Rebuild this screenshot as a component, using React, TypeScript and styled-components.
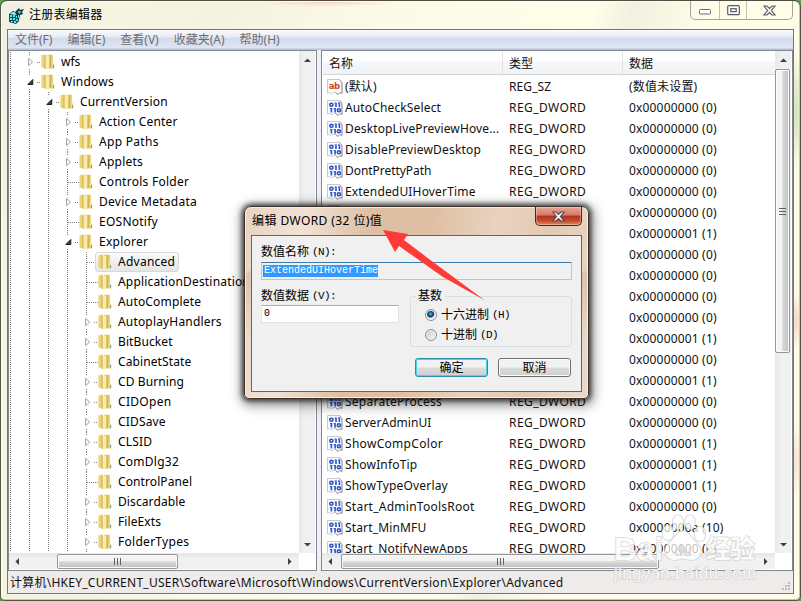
import React from "react";
import styled, { createGlobalStyle, css } from "styled-components";

const UI = `"Noto Sans", "Noto Sans CJK SC", sans-serif`;
const MONO = `"Liberation Mono", "Noto Sans CJK SC", monospace`;

const GlobalStyle = createGlobalStyle`
  html, body { margin: 0; padding: 0; overflow: hidden; }
  * { box-sizing: border-box; }
  body { font: 12px/20px ${UI}; color: #111; }
  svg { display: block; flex: none; }
`;

const Desktop = styled.main`
  position: relative;
  width: 801px;
  height: 601px;
  overflow: hidden;
  background: #5aa14c;
`;

const Window = styled.section`
  width: 801px;
  height: 601px;
  display: flex;
  flex-direction: column;
  border: 1px solid #555449;
  border-top: 1px solid #4f4b45;
  border-radius: 7px 7px 5px 5px;
  overflow: hidden;
  padding: 0 6px 6px 6px;
  background:
    radial-gradient(ellipse 6px 60px at 795px 110px, #cfe2b4 0%, transparent 100%),
    radial-gradient(ellipse 6px 30px at 795px 320px, #f8d5bd 0%, transparent 100%),
    radial-gradient(ellipse 6px 40px at 795px 460px, #f6e2cd 0%, transparent 100%),
    radial-gradient(ellipse 75px 5px at 325px 1px, #fbd3c3 0%, transparent 100%),
    linear-gradient(105deg, #eef0e2 0%, #f6f5e2 9%, #f3f3e0 24%, #fbfae7 38%, #fffee9 62%, #f1f1df 66%, #fffde8 74%, #fffde9 100%);
  box-shadow: inset 1px 1px 0 #fffef4, inset -1px -1px 0 #c3c6b5;
`;

const TitleBar = styled.header`
  display: flex;
  align-items: flex-start;
  height: 28px;
  flex: none;
`;

const TitleIcon = styled.span`
  margin: 6px 0 0 1px;
`;

const TitleText = styled.h1`
  margin: 4px 0 0 4px;
  font: 12px/20px ${UI};
  letter-spacing: 0.25px;
  color: #000;
  flex: 1;
`;

const Captions = styled.div`
  display: flex;
  width: 103px;
  height: 19px;
  border: 1px solid #a4a49a;
  border-top: 0;
  border-radius: 0 0 5px 5px;
  overflow: hidden;
  margin-right: 1px;
`;

const Caption = styled.button<{ $w: number }>`
  width: ${(p) => p.$w}px;
  border: 0;
  border-left: 1px solid #c1c1b5;
  padding: 0;
  background: transparent;
  display: flex;
  align-items: center;
  justify-content: center;
  &:first-child { border-left: 0; padding-top: 3px; }
`;

const Client = styled.div`
  flex: 1;
  display: flex;
  flex-direction: column;
  border: 1px solid #77776e;
  background: #eeebea;
  min-height: 0;
  width: 787px;
`;

const MenuBar = styled.nav`
  height: 20px;
  flex: none;
  display: flex;
  gap: 15px;
  padding-left: 7px;
  background: linear-gradient(#fafbfd 0%, #e6eaf5 35%, #d4dbee 42%, #dfe5f3 92%, #b9c2d6 93%);
  color: #6e6e6e;
  line-height: 20px;
`;

const MenuItem = styled.span`
  white-space: nowrap;
`;

const Panes = styled.div`
  display: grid;
  grid-template-columns: 309px 472px;
  gap: 4px;
  height: 521px;
  flex: none;
  background: #eff0f5;
`;

const Pane = styled.section`
  border: 1px solid #828790;
  background: #fff;
  display: grid;
  grid-template-columns: minmax(0, 1fr) 17px;
  grid-template-rows: 502px 17px;
  min-width: 0;
`;

const Viewport = styled.div`
  overflow: hidden;
  padding-top: 1px;
`;

const TreeRow = styled.div`
  display: flex;
  align-items: center;
  height: 20px;
  padding-left: 1px;
`;

const Guide = styled.span<{ $gap?: boolean }>`
  width: 19px;
  height: 20px;
  flex: none;
  background-image: repeating-linear-gradient(#7e7e7e 0 1px, transparent 1px 2px);
  background-size: 1px 20px;
  background-repeat: no-repeat;
  ${(p) =>
    p.$gap &&
    css`
      background-size: 1px 3px, 1px 3px;
      background-image: repeating-linear-gradient(#7e7e7e 0 1px, transparent 1px 2px),
        repeating-linear-gradient(#7e7e7e 0 1px, transparent 1px 2px);
      background-position: 0 0, 0 17px;
    `}
`;

const Joint = styled(Guide)`
  width: 12px;
  display: flex;
  align-items: center;
`;

const Twig = styled.span<{ $long?: boolean }>`
  width: ${(p) => (p.$long ? 11 : 4)}px;
  height: 1px;
  margin-left: ${(p) => (p.$long ? 1 : 0)}px;
  background: repeating-linear-gradient(90deg, #7e7e7e 0 1px, transparent 1px 2px);
`;

const Expander = styled.span`
  width: 8px;
  margin-left: -2px;
  margin-right: 2px;
  flex: none;
`;

const NodeLabel = styled.span<{ $s?: number }>`
  margin-left: 3px;
  padding: 0 3px;
  line-height: 18px;
  color: #000;
  white-space: nowrap;
  letter-spacing: ${(p) => p.$s ?? 0.17}px;
`;

const Node = styled.span<{ $selected?: boolean }>`
  display: flex;
  align-items: center;
  height: 20px;
  ${(p) =>
    p.$selected &&
    css`
      margin-left: -3px;
      padding-left: 2px;
      border: 1px solid #d9d9d9;
      border-radius: 3px;
      background: linear-gradient(#fafafa, #e5e5e5);
    `}
`;

const VScroll = styled.div`
  background: linear-gradient(90deg, #e8e8e8, #f1f1f1 40%, #f0f0f0);
  display: flex;
  flex-direction: column;
  align-items: flex-start;
  padding-top: 1px;
  border-right: 1px solid #fff;
`;

const HScroll = styled.div`
  background: linear-gradient(#e6e6e6, #f1f1f1 40%, #f0f0f0);
  display: flex;
  align-items: center;
  height: 16px;
  padding-right: 1px;
`;

const ScrollEnd = styled.span<{ $vertical?: boolean; $push?: boolean }>`
  width: 17px;
  height: 17px;
  flex: none;
  display: flex;
  align-items: center;
  justify-content: center;
  ${(p) => p.$push && (p.$vertical ? "margin-top: auto;" : "margin-left: auto;")}
`;

const Thumb = styled.span<{ $length: number; $vertical?: boolean; $offset?: number }>`
  display: flex;
  align-items: center;
  justify-content: center;
  flex: none;
  border: 1px solid #969696;
  border-radius: 2px;
  box-shadow: inset 0 0 0 1px #fbfbfb;
  ${(p) =>
    p.$vertical
      ? css`
          width: 15px;
          height: ${p.$length}px;
          background: linear-gradient(90deg, #f4f4f4 0 45%, #d8d8db 52%, #bfbfc3);
        `
      : css`
          height: 15px;
          width: ${p.$length}px;
          margin-left: ${p.$offset ?? 0}px;
          background: linear-gradient(#f4f4f4 0 45%, #d8d8db 52%, #bfbfc3);
        `}
`;

const Corner = styled.div`
  background: #fff;
`;

const columns = css`
  display: grid;
  grid-template-columns: 180px 120px 1fr;
`;

const ListHeader = styled.div`
  ${columns}
  height: 23px;
  margin-left: 1px;
  line-height: 24px;
  background: linear-gradient(#fff 0 40%, #f6f7f9 42%, #f1f2f4);
  border-bottom: 1px solid #d5d5d5;
`;

const HeaderCell = styled.span`
  padding-left: 6px;
  border-right: 1px solid #dfe3e8;
  &:last-child { border-right: 0; }
`;

const ListRow = styled.div`
  ${columns}
  height: 21px;
  margin-left: 1px;
  line-height: 21px;
  white-space: nowrap;
`;

const Cell = styled.span<{ $s?: number }>`
  padding-left: 6px;
  letter-spacing: ${(p) => p.$s ?? 0}px;
  display: flex;
  align-items: center;
`;

const NameCell = styled(Cell)`
  padding-left: 4px;
  gap: 2px;
`;

const ListBody = styled.div`
  padding-top: 1px;
`;

const StatusBar = styled.footer`
  flex: 1;
  display: flex;
  justify-content: space-between;
  align-items: flex-end;
  padding: 0 2px 0 2px;
  line-height: 20px;
`;

const SizeGrip = styled.svg`
  margin-bottom: 2px;
`;

const StatusText = styled.span`
  white-space: nowrap;
  letter-spacing: 0.25px;
`;

/* Modal dialog, floats over the registry window */
const Dialog = styled.section`
  position: absolute;
  left: 244px;
  top: 206px;
  width: 345px;
  height: 193px;
  border: 1px solid #3d332b;
  border-radius: 7px 7px 5px 5px;
  padding: 0 6px 6px 6px;
  display: flex;
  flex-direction: column;
  background:
    linear-gradient(transparent 0 62px, #c9a78d66 68px, transparent 130px),
    linear-gradient(100deg, #e8d3c2 0%, #f2e2d4 16%, #ddbfa4 34%, #dfbfa3 50%, #e9d3bf 68%, #e3c9b3 82%, #eadacb 100%);
  box-shadow: inset 0 0 0 1px #f8ece1, 0 0 5px 2px #000000aa, 1px 3px 12px 4px #00000066;
`;

const DialogTitle = styled.div`
  display: flex;
  justify-content: space-between;
  height: 28px;
  flex: none;
`;

const DialogHeading = styled.h2`
  margin: 4px 0 0 1px;
  font: 12px/20px ${UI};
  color: #000;
  white-space: nowrap;
  letter-spacing: 0.42px;
`;

const CloseButton = styled.button`
  width: 47px;
  height: 19px;
  padding: 0;
  border: 1px solid #4c231c;
  border-top: 0;
  border-radius: 0 0 5px 5px;
  display: flex;
  align-items: center;
  justify-content: center;
  background: linear-gradient(#e5a699 0%, #d4796a 45%, #b5321b 50%, #c2492c 75%, #dd8b5f 100%);
  box-shadow: inset 0 0 0 1px #ffffff55;
`;

const DialogBody = styled.form`
  flex: 1;
  display: flex;
  flex-direction: column;
  background: #f0f0f0;
  border: 1px solid #6d625a;
  padding: 6px 9px 0 9px;
`;

const FieldLabel = styled.label`
  display: flex;
  align-items: center;
  height: 20px;
  font: 12px/20px ${UI};
  color: #000;
`;

const DataLabel = styled(FieldLabel)`
  margin-top: 6px;
  height: 19px;
`;

const Key = styled.span`
  font: 11px/16px ${MONO};
  letter-spacing: -0.6px;
  margin-left: 3px;
`;

const TextField = styled.div<{ $w: number; $readOnly?: boolean }>`
  width: ${(p) => p.$w}px;
  height: 18px;
  display: flex;
  align-items: center;
  padding-left: 2px;
  font: 10px/12px ${MONO};
  color: #000;
  background: ${(p) => (p.$readOnly ? "#f0f0f0" : "#fff")};
  border: 1px solid ${(p) => (p.$readOnly ? "#a9cbe2" : "#dfe3ea")};
  border-top-color: ${(p) => (p.$readOnly ? "#3d7bad" : "#abadb3")};
  border-radius: 1px;
`;

const Selection = styled.mark`
  background: #3399ff;
  color: #fff;
  height: 12px;
  border-left: 1px solid #c76a10;
  margin-left: -1px;
`;

const Split = styled.div`
  display: grid;
  grid-template-columns: 149px 162px;
  align-items: start;
`;

const RadioGroup = styled.fieldset`
  margin: 7px 0 0 0;
  height: 60px;
  width: 162px;
  padding: 0 0 0 14px;
  border: 1px solid #d5dfe5;
  border-radius: 3px;
  min-width: 0;
`;

const Legend = styled.legend`
  margin-left: -9px;
  padding: 0 3px 0 2px;
  line-height: 18px;
  height: 18px;
  color: #000;
`;

const Radio = styled.div`
  display: flex;
  align-items: center;
  height: 20px;
  gap: 4px;
  color: #000;
`;

const RadioKey = styled(Key)`
  margin-left: -1px;
`;

const Dot = styled.span<{ $on?: boolean }>`
  width: 12px;
  height: 12px;
  border-radius: 50%;
  border: 1px solid #8e8f8f;
  box-shadow: inset 0 0 0 1px #f2f2f2;
  background: ${(p) =>
    p.$on
      ? "radial-gradient(circle at 45% 40%, #7cd3f5 0, #1c6ea3 1.5px, #0c3557 3px, #f0f0f0 4.2px)"
      : "linear-gradient(135deg, #c5c9cd, #f8f8f8)"};
`;

const Actions = styled.div`
  display: flex;
  justify-content: flex-end;
  gap: 10px;
  margin-top: 11px;
  padding-right: 1px;
`;

const ActionButton = styled.button<{ $primary?: boolean }>`
  width: 73px;
  height: 19px;
  padding: 1px 0 0;
  font: 12px/16px ${UI};
  color: #000;
  border-radius: 3px;
  border: 1px solid ${(p) => (p.$primary ? "#2e8bab" : "#707070")};
  box-shadow: inset 0 0 0 1px ${(p) => (p.$primary ? "#45d4f8" : "#fcfcfc")};
  background: linear-gradient(#f2f2f2 0 48%, #dcdcdc 52%, #cfcfcf);
`;

const Overlay = styled.svg`
  position: absolute;
  left: 0;
  top: 0;
  pointer-events: none;
`;

const RegeditIcon = () => (
  <svg width="17" height="17" viewBox="0 0 17 17">
    <path d="M1 7l4-3 6 2v8l-3 3-7-2z" fill="#0c5258" />
    <path d="M2 8h2v2H2zM5 8h2v2H5zM2 11h2v2H2zM5 11h2v2H5zM3 14h2v1H3zM6 14h2v2H6zM8 9h2v2H8zM8 12h2v2H8z" fill="#5ee4e8" />
    <path d="M2 7l3-2 5 1-2 2z" fill="#a8f7f5" />
    <path d="M8 4l3-3 1 2 4-1-2 3 1 2-3 1-1 5-2-1V8L7 6z" fill="#12363a" />
    <path d="M10 4l2 0 1 1-2 2zM10 8h1v3h-1z" fill="#64e7e7" />
  </svg>
);

const FolderIcon = () => (
  <svg width="14" height="16" viewBox="0 0 14 16">
    <path d="M6 .8h5.6v9l1.6.6v4H6z" fill="#e6cd70" />
    <path d="M.4 1.2L4.8.5v14.3L.4 13.6z" fill="#ead47a" />
    <path d="M3.2 1.4l1.6-.9v14.3l-1.6-.6z" fill="#d9bd58" />
    <path d="M4.8 2.2l4-1v13l-3 1.4-1-.8z" fill="#f7ecae" />
    <path d="M8.6 1.3l1.2-.3v12.5l-1.4 1z" fill="#cda93c" />
    <path d="M9.8 1h1.8v10l-1.8 2z" fill="#e3ca6c" />
    <path d="M11 9.5l1-1.2 1.2 1.2v5H11z" fill="#f3e7a8" />
    <path d="M11.8 11h1.2v3h-1.2z" fill="#58a7cc" />
  </svg>
);

const PageShape = () => (
  <>
    <path d="M.5.5h12l2.5 3v11l-2-1-2 2-2.5-2H6.5l-2 1.5-2-1.5-2 .5z" fill="#fcfcfc" stroke="#c9c9c9" />
    <path d="M12.5.5l2.5 3v11l-2-1-2 2-2.5-2" fill="none" stroke="#9a9a9a" />
  </>
);

const StringIcon = () => (
  <svg width="16" height="16" viewBox="0 0 16 16">
    <PageShape />
    <text x="1.8" y="10" fontFamily="DejaVu Sans" fontWeight="bold" fontSize="8.5" textLength="11.5" fill="#d0482a">ab</text>
  </svg>
);

const BinaryIcon = () => (
  <svg width="16" height="16" viewBox="0 0 16 16">
    <PageShape />
    <g fill="none" stroke="#2a50cf" strokeWidth="1.6">
      <ellipse cx="4.4" cy="4.7" rx="1.6" ry="1.5" />
      <ellipse cx="11.9" cy="10.3" rx="1.6" ry="1.5" />
      <path d="M9 2.4v4.6M12.4 2.4v4.6M4.4 8v4.6M8.1 8v4.6" />
      <path d="M7.5 3h1M11 3h1M3 8.6h1M6.6 8.6h1" strokeWidth="1" />
    </g>
  </svg>
);

const Arrow = ({ dir }: { dir: "up" | "down" | "left" | "right" }) => {
  const shapes = { up: "M1 6l3.5-3.6L8 6z", down: "M1 3h7L4.5 6.6z", left: "M6 1v7L2.4 4.5z", right: "M3 1v7l3.6-3.5z" };
  return (
    <svg width="9" height="9" viewBox="0 0 9 9">
      <path d={shapes[dir]} fill="#404040" />
    </svg>
  );
};

const Grip = ({ vertical }: { vertical?: boolean }) => (
  <svg width="9" height="9" viewBox="0 0 9 9" shapeRendering="crispEdges">
    <path
      d={vertical ? "M1 1h7v1H1zM1 4h7v1H1zM1 7h7v1H1z" : "M1 1h1v7H1zM4 1h1v7H4zM7 1h1v7H7z"}
      fill="#606060"
    />
  </svg>
);

const CrossIcon = ({ light }: { light?: boolean }) => (
  <svg width="13" height="11" viewBox="0 0 13 11">
    <path
      d="M1 1h3l2.5 2.4L9 1h3L8.4 5.5 12 10H9L6.5 7.6 4 10H1l3.6-4.5z"
      fill={light ? "#fff" : "#f8f8f8"}
      stroke={light ? "#4f4a54" : "#575b68"}
      strokeWidth="1.1"
    />
  </svg>
);

type TreeItem = { label: string; depth: number; state?: "open" | "closed"; selected?: boolean; s?: number };

const tree: TreeItem[] = [
  { label: "wfs", depth: 1, state: "closed", s: 0 },
  { label: "Windows", depth: 1, state: "open", s: 0.25 },
  { label: "CurrentVersion", depth: 2, state: "open" },
  { label: "Action Center", depth: 3, state: "closed" },
  { label: "App Paths", depth: 3, state: "closed", s: 0.3 },
  { label: "Applets", depth: 3, state: "closed", s: 0.25 },
  { label: "Controls Folder", depth: 3, s: 0.27 },
  { label: "Device Metadata", depth: 3, state: "closed", s: 0.27 },
  { label: "EOSNotify", depth: 3, s: 0.25 },
  { label: "Explorer", depth: 3, state: "open", s: 0.25 },
  { label: "Advanced", depth: 4, selected: true, s: 0.25 },
  { label: "ApplicationDestinations", depth: 4 },
  { label: "AutoComplete", depth: 4 },
  { label: "AutoplayHandlers", depth: 4, state: "closed" },
  { label: "BitBucket", depth: 4, state: "closed", s: 0.1 },
  { label: "CabinetState", depth: 4, s: 0.1 },
  { label: "CD Burning", depth: 4, state: "closed", s: 0.1 },
  { label: "CIDOpen", depth: 4, state: "closed", s: 0.3 },
  { label: "CIDSave", depth: 4, state: "closed" },
  { label: "CLSID", depth: 4, state: "closed" },
  { label: "ComDlg32", depth: 4, state: "closed", s: 0.25 },
  { label: "ControlPanel", depth: 4, s: 0.1 },
  { label: "Discardable", depth: 4, state: "closed", s: 0.1 },
  { label: "FileExts", depth: 4, state: "closed", s: 0.1 },
  { label: "FolderTypes", depth: 4, state: "closed", s: 0.28 },
];

type Value = { name?: string; type?: string; data: string; s?: number };
const zero = "0x00000000 (0)";
const one = "0x00000001 (1)";

const values: Value[] = [
  { name: "(默认)", type: "REG_SZ", data: "(数值未设置)", s: 0.1 },
  { name: "AutoCheckSelect", data: zero, s: 0.14 },
  { name: "DesktopLivePreviewHove...", data: zero, s: 0.13 },
  { name: "DisablePreviewDesktop", data: zero, s: 0.2 },
  { name: "DontPrettyPath", data: zero, s: -0.05 },
  { name: "ExtendedUIHoverTime", data: zero, s: 0.17 },
  { data: zero },
  { data: one },
  { data: zero },
  { data: zero },
  { data: zero },
  { data: zero },
  { data: one },
  { data: zero },
  { data: one },
  { name: "SeparateProcess", data: zero, s: 0.25 },
  { name: "ServerAdminUI", data: zero, s: 0.05 },
  { name: "ShowCompColor", data: one, s: 0.3 },
  { name: "ShowInfoTip", data: one, s: 0.17 },
  { name: "ShowTypeOverlay", data: one, s: 0.17 },
  { name: "Start_AdminToolsRoot", data: zero, s: 0.25 },
  { name: "Start_MinMFU", data: "0x0000000a (10)", s: 0.15 },
  { name: "Start_NotifyNewApps", data: zero, s: 0.17 },
];

const TreeNode = ({ item }: { item: TreeItem }) => (
  <TreeRow>
    {Array.from({ length: item.depth }, (_, i) => (
      <Guide key={i} />
    ))}
    <Joint $gap={!!item.state}>
      {item.state ? (
        <>
          <Expander>
            <svg width="8" height="10" viewBox="0 0 8 10">
              {item.state === "open" ? (
                <path d="M5.8 2.5v5h-5z" fill="#404040" stroke="#222" />
              ) : (
                <path d="M1.6 1.3v7.4l4-3.7z" fill="#fff" stroke="#a0a0a0" />
              )}
            </svg>
          </Expander>
          <Twig />
        </>
      ) : (
        <Twig $long />
      )}
    </Joint>
    <Node $selected={item.selected}>
      <FolderIcon />
      <NodeLabel $s={item.s}>{item.label}</NodeLabel>
    </Node>
  </TreeRow>
);

export default function App() {
  return (
    <Desktop>
      <GlobalStyle />
      <Window>
        <TitleBar>
          <TitleIcon>
            <RegeditIcon />
          </TitleIcon>
          <TitleText>注册表编辑器</TitleText>
          <Captions>
            <Caption $w={28}>
              <svg width="12" height="6" viewBox="0 0 12 6">
                <rect x=".5" y=".5" width="11" height="4.5" rx="1" fill="#fff" stroke="#686b75" />
              </svg>
            </Caption>
            <Caption $w={27}>
              <svg width="13" height="11" viewBox="0 0 13 11">
                <rect x=".7" y=".7" width="11.6" height="9" rx="1" fill="#fff" stroke="#575b68" strokeWidth="1.2" />
                <rect x="3.8" y="3.7" width="5.4" height="3" fill="#fff" stroke="#575b68" strokeWidth="1.2" />
              </svg>
            </Caption>
            <Caption $w={46}>
              <CrossIcon />
            </Caption>
          </Captions>
        </TitleBar>
        <Client>
          <MenuBar>
            <MenuItem>文件(F)</MenuItem>
            <MenuItem>编辑(E)</MenuItem>
            <MenuItem>查看(V)</MenuItem>
            <MenuItem>收藏夹(A)</MenuItem>
            <MenuItem>帮助(H)</MenuItem>
          </MenuBar>
          <Panes>
            <Pane>
              <Viewport>
                {tree.map((item) => (
                  <TreeNode key={item.label} item={item} />
                ))}
              </Viewport>
              <VScroll>
                <ScrollEnd><Arrow dir="up" /></ScrollEnd>
                <ScrollEnd $vertical $push><Arrow dir="down" /></ScrollEnd>
              </VScroll>
              <HScroll>
                <ScrollEnd><Arrow dir="left" /></ScrollEnd>
                <Thumb $length={121} $offset={31}><Grip /></Thumb>
                <ScrollEnd $push><Arrow dir="right" /></ScrollEnd>
              </HScroll>
              <Corner />
            </Pane>
            <Pane>
              <Viewport>
                <ListHeader>
                  <HeaderCell>名称</HeaderCell>
                  <HeaderCell>类型</HeaderCell>
                  <HeaderCell>数据</HeaderCell>
                </ListHeader>
                <ListBody>
                  {values.map((v, i) => (
                    <ListRow key={i}>
                      <NameCell $s={v.s}>
                        {i === 0 ? <StringIcon /> : <BinaryIcon />}
                        {v.name}
                      </NameCell>
                      <Cell $s={v.type ? 0.1 : 0.42}>{v.type ?? "REG_DWORD"}</Cell>
                      <Cell $s={0.17}>{v.data}</Cell>
                    </ListRow>
                  ))}
                </ListBody>
              </Viewport>
              <VScroll>
                <ScrollEnd><Arrow dir="up" /></ScrollEnd>
                <Thumb $vertical $length={284}><Grip vertical /></Thumb>
                <ScrollEnd $vertical $push><Arrow dir="down" /></ScrollEnd>
              </VScroll>
              <HScroll>
                <ScrollEnd><Arrow dir="left" /></ScrollEnd>
                <Thumb $length={318} $offset={2}><Grip /></Thumb>
                <ScrollEnd $push><Arrow dir="right" /></ScrollEnd>
              </HScroll>
              <Corner />
            </Pane>
          </Panes>
          <StatusBar>
            <StatusText>计算机\HKEY_CURRENT_USER\Software\Microsoft\Windows\CurrentVersion\Explorer\Advanced</StatusText>
            <SizeGrip width="9" height="9" viewBox="0 0 9 9" shapeRendering="crispEdges">
              <path d="M6 0h2v2H6zM3 3h2v2H3zM6 3h2v2H6zM0 6h2v2H0zM3 6h2v2H3zM6 6h2v2H6z" fill="#bdbab8" />
            </SizeGrip>
          </StatusBar>
        </Client>
      </Window>

      <Dialog>
        <DialogTitle>
          <DialogHeading>编辑 DWORD (32 位)值</DialogHeading>
          <CloseButton type="button">
            <CrossIcon light />
          </CloseButton>
        </DialogTitle>
        <DialogBody>
          <FieldLabel>数值名称<Key>(N):</Key></FieldLabel>
          <TextField $w={311} $readOnly>
            <Selection>ExtendedUIHoverTime</Selection>
          </TextField>
          <Split>
            <div>
              <DataLabel>数值数据<Key>(V):</Key></DataLabel>
              <TextField $w={138}>0</TextField>
            </div>
            <RadioGroup>
              <Legend>基数</Legend>
              <Radio><Dot $on />十六进制<RadioKey>(H)</RadioKey></Radio>
              <Radio><Dot />十进制<RadioKey>(D)</RadioKey></Radio>
            </RadioGroup>
          </Split>
          <Actions>
            <ActionButton type="button" $primary>确定</ActionButton>
            <ActionButton type="button">取消</ActionButton>
          </Actions>
        </DialogBody>
      </Dialog>

      <Overlay width="801" height="601" viewBox="0 0 801 601">
        <path d="M383 230l25 4-4 6 25 19 56 41.5-42-23.5-44-31-4 6z" fill="#ff3b38" />
        <g fill="#fff" fillOpacity=".72" stroke="#cfcfcf" strokeOpacity=".8" strokeWidth="1.6" paintOrder="stroke">
          <ellipse cx="668" cy="533" rx="5.5" ry="7.5" />
          <ellipse cx="678" cy="522" rx="5" ry="7" />
          <ellipse cx="690" cy="522" rx="5" ry="7" />
          <ellipse cx="700" cy="534" rx="5.5" ry="7.5" />
          <path d="M683 531c6 0 8 7 14 12 7 6 4 17-5 17-4 0-6-1-9-1s-5 1-9 1c-9 0-12-11-5-17 6-5 8-12 14-12z" />
          <g fontFamily="Liberation Sans, sans-serif" fontWeight="bold" fillOpacity=".85">
            <text x="614" y="560" fontSize="31" textLength="49">Bai</text>
            <text x="706" y="558" fontSize="25" textLength="49" fontFamily="Noto Sans CJK SC">经验</text>
            <text x="614" y="579" fontSize="16.5" textLength="142" fontWeight="normal">jingyan.baidu.com</text>
          </g>
        </g>
        <text x="674" y="556" fontSize="15" fontFamily="Liberation Sans" fontWeight="bold" fill="#d8d8d8" textLength="18">du</text>
      </Overlay>
    </Desktop>
  );
}
